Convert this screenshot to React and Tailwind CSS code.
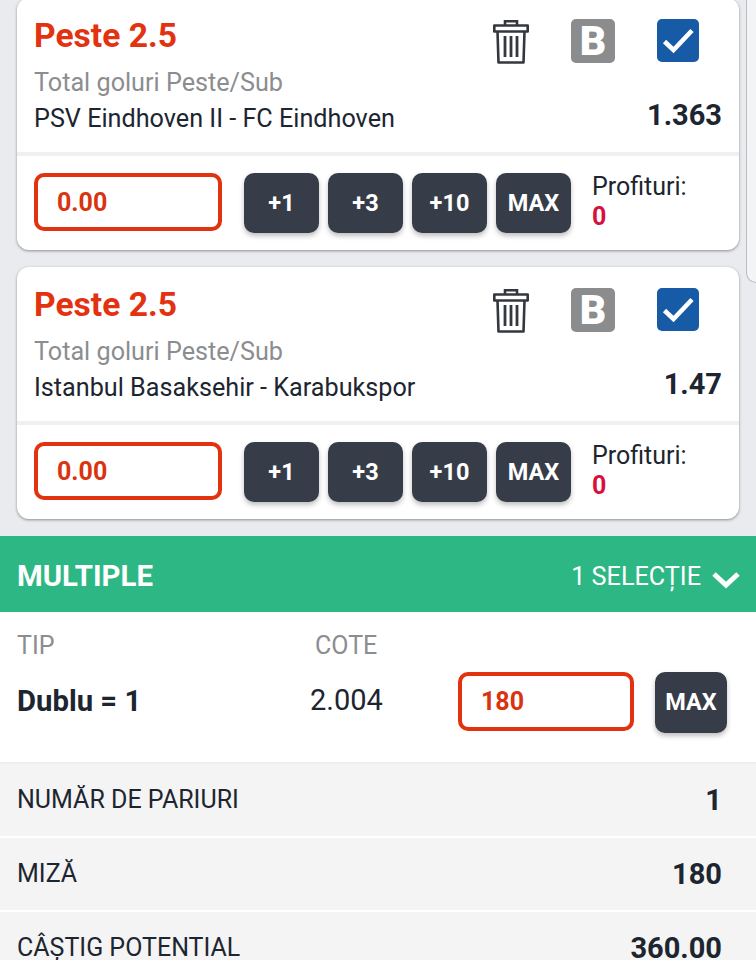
/* ── Bet slip data ── */
const BETS = [
  { id: 1, match: 'PSV Eindhoven II - FC Eindhoven', odds: '1.363' },
  { id: 2, match: 'Istanbul Basaksehir - Karabukspor', odds: '1.47' },
];

const STAKES = ['+1', '+3', '+10', 'MAX'];

const TrashIcon = () => (
  <svg width="36" height="44" viewBox="0 0 36 44" fill="none" stroke="#33383f" strokeWidth="2.6" className="mt-[1px]">
    <path d="M12 5V1.3h12V5" />
    <path d="M1.3 11.5V5.5h33.4v6z" strokeLinejoin="round" />
    <path d="M4.5 11.5l1 31h25l1-31" strokeLinejoin="round" />
    <path d="M12 16v21M18 16v21M24 16v21" strokeWidth="2.8" />
  </svg>
);

const CheckIcon = () => (
  <svg width="42" height="43" viewBox="0 0 42 43" fill="none" stroke="#ffffff" strokeWidth="4.6">
    <path d="M7.5 22.5l9 8.5L35 11.5" />
  </svg>
);

const StakeButton = ({ label }) => (
  <button className="w-[75px] h-[60px] pt-[1px] rounded-[10px] bg-[#373d48] text-white font-bold text-[23.5px] shadow-[0_3px_5px_rgba(0,0,0,0.25)]">
    {label}
  </button>
);

const BetCard = ({ bet }) => (
  <div className="w-[722px] h-[252px] ml-[17px] bg-white rounded-[12px] shadow-[0_1px_3px_rgba(0,0,0,0.4)] flex flex-col">
    <div className="h-[158px] pl-[17px] pr-[17px] flex justify-between border-b-[4px] border-[#eef0f2]">
      <div className="flex flex-col">
        <div className="mt-[19px] text-[33.6px] leading-[38px] font-bold text-[#e2320f]">Peste 2.5</div>
        <div className="mt-[12px] text-[25.2px] leading-[32px] text-[#8b8d90]">Total goluri Peste/Sub</div>
        <div className="mt-[4px] text-[25.2px] leading-[32px] text-[#1d2530]">{bet.match}</div>
      </div>
      <div className="flex flex-col items-end">
        <div className="flex items-start mt-[21px] mr-[23px]">
          <TrashIcon />
          <div className="ml-[42px] w-[44px] h-[44px] rounded-[5px] bg-[#8b8c8e] flex items-center justify-center text-white font-black text-[41px] leading-none">
            B
          </div>
          <div className="ml-[42px] w-[42px] h-[43px] rounded-[5px] bg-[#175aa6]">
            <CheckIcon />
          </div>
        </div>
        <div className="mt-[33px] text-[29px] leading-[36px] font-bold text-[#1d2530]">{bet.odds}</div>
      </div>
    </div>
    <div className="flex pl-[17px] pt-[17px]">
      <div className="w-[188px] h-[58px] pt-[1px] border-[4px] border-[#e2320f] rounded-[10px] pl-[19px] flex items-center text-[25px] font-bold text-[#d9330f]">
        0.00
      </div>
      <div className="ml-[22px] flex gap-[9px]">
        {STAKES.map((label) => (
          <StakeButton key={label} label={label} />
        ))}
      </div>
      <div className="ml-[21px] -mt-[2px]">
        <div className="text-[25px] leading-[32px] text-[#1d2530]">Profituri:</div>
        <div className="text-[25px] leading-[28px] font-bold text-[#d6103f]">0</div>
      </div>
    </div>
  </div>
);

const SummaryRow = ({ label, value }) => (
  <div className="h-[72px] mb-[2px] bg-[#f4f4f4] pl-[17px] pr-[34px] flex items-center justify-between">
    <span className="text-[25px] text-[#1d2530]">{label}</span>
    <span className="mt-[2px] text-[29px] font-bold text-[#1d2530]">{value}</span>
  </div>
);

export default function App() {
  return (
    <div className="relative w-[756px] h-[960px] overflow-hidden bg-[#e9ebee] font-['Roboto',sans-serif]">
      {/* Edge handle lying over the right side of the list */}
      <div className="absolute right-0 top-0 w-[10px] h-[283px] bg-[#f3f4f6] border-l border-b border-[#b9bcc0] rounded-bl-[10px]" />

      <div className="flex flex-col gap-[17px] -mt-[2px]">
        {BETS.map((bet) => (
          <BetCard key={bet.id} bet={bet} />
        ))}
      </div>

      {/* ── Multiple header ── */}
      <div className="mt-[17px] h-[76px] bg-[#2db784] pt-[5px] pl-[17px] pr-[16px] flex items-center justify-between text-white">
        <span className="text-[29.4px] font-bold">MULTIPLE</span>
        <div className="flex items-center gap-[11px]">
          <span className="text-[25.2px]">1 SELECȚIE</span>
          <svg width="28" height="18" viewBox="0 0 28 18" fill="none" stroke="#ffffff" strokeWidth="5" className="mt-[7px]">
            <path d="M2 3l12 11L26 3" />
          </svg>
        </div>
      </div>

      {/* ── Type, odds and stake ── */}
      <div className="h-[152px] bg-white flex border-b-[2px] border-[#eeeeee]">
        <div className="w-[298px] pl-[17px] pt-[18px]">
          <div className="text-[25px] leading-[32px] text-[#8b8d90]">TIP</div>
          <div className="mt-[21px] text-[29.3px] leading-[36px] font-bold text-[#1d2530]">Dublu = 1</div>
        </div>
        <div className="w-[160px] pt-[18px]">
          <div className="pl-[17px] text-[25px] leading-[32px] text-[#8b8d90]">COTE</div>
          <div className="mt-[20px] pl-[12px] text-[29px] leading-[36px] text-[#1d2530]">2.004</div>
        </div>
        <div className="w-[176px] h-[59px] mt-[60px] border-[4px] border-[#e2320f] rounded-[10px] pl-[19px] flex items-center text-[25px] font-bold text-[#d9330f]">
          180
        </div>
        <button className="ml-[21px] mt-[60px] w-[72px] h-[61px] rounded-[10px] bg-[#373d48] text-white font-bold text-[23.5px] shadow-[0_3px_5px_rgba(0,0,0,0.25)]">
          MAX
        </button>
      </div>

      <div className="bg-white">
        <SummaryRow label="NUMĂR DE PARIURI" value="1" />
        <SummaryRow label="MIZĂ" value="180" />
        <SummaryRow label="CÂȘTIG POTENTIAL" value="360.00" />
      </div>
    </div>
  );
}
